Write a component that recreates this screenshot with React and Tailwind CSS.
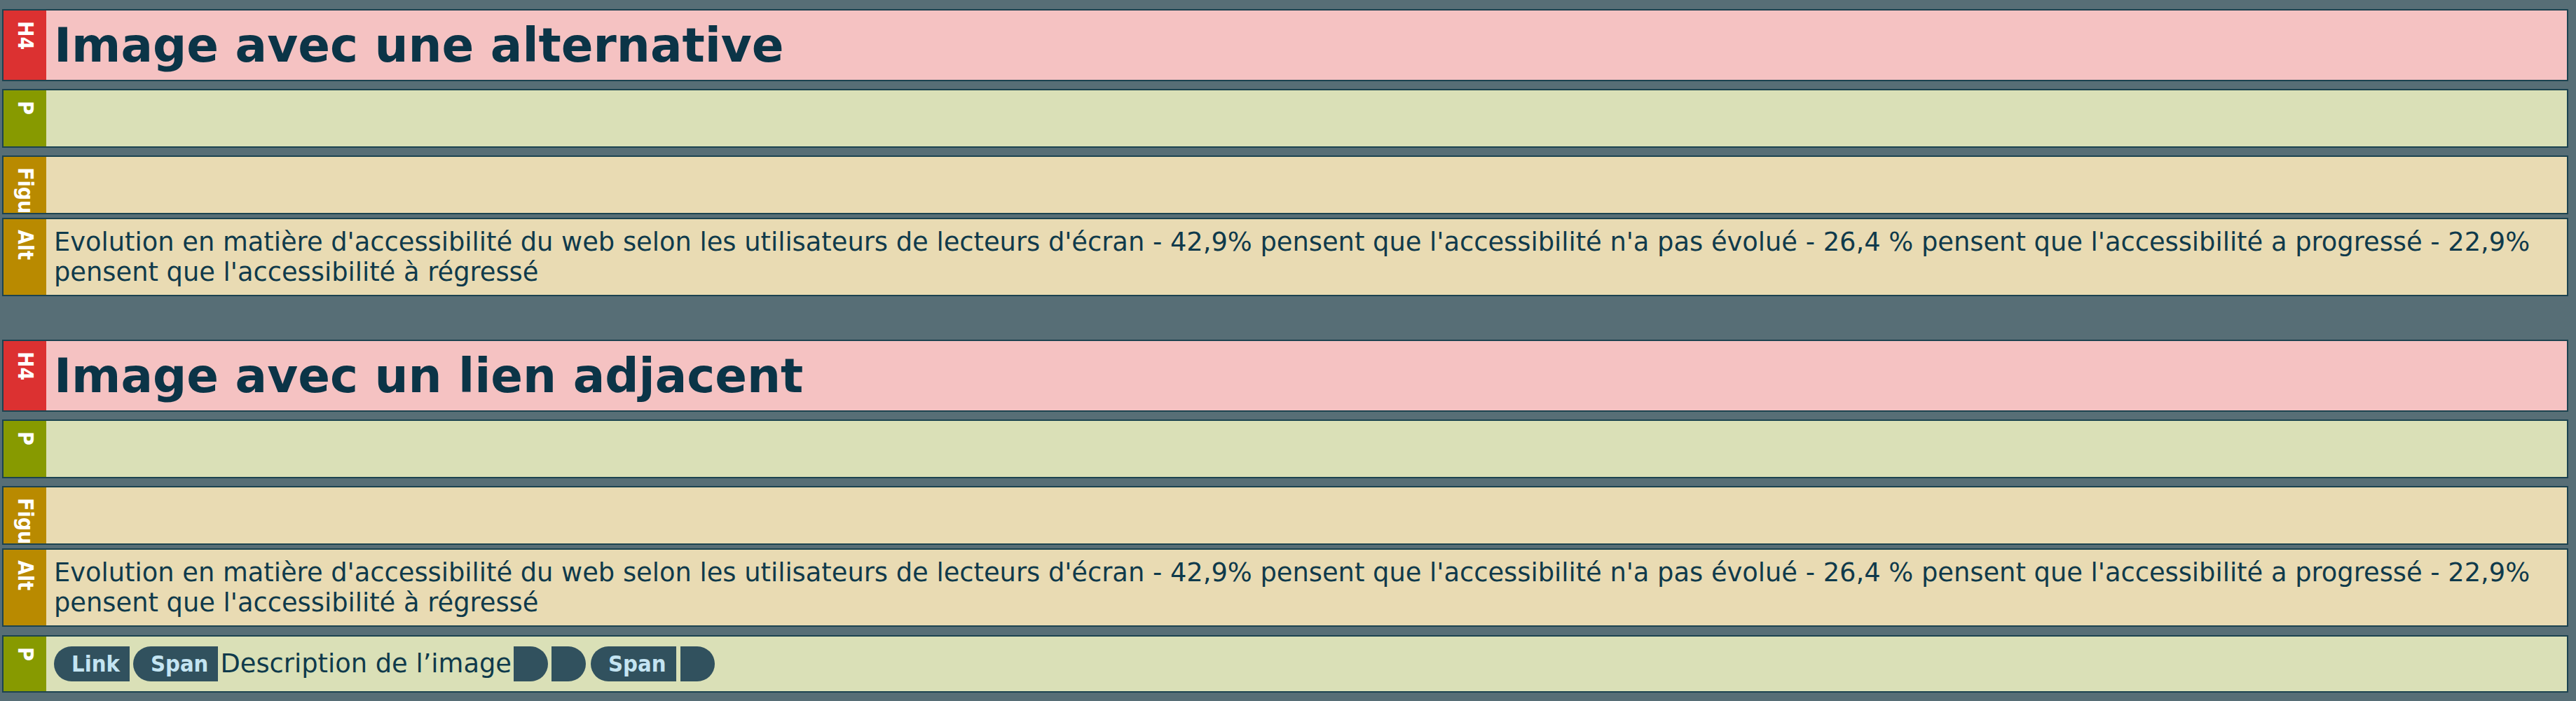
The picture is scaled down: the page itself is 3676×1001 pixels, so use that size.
import React from "react";

const condensed = { fontFamily: '"DejaVu Sans Condensed", "DejaVu Sans", sans-serif' };
const body = { fontFamily: '"DejaVu Sans", Verdana, sans-serif' };

const kinds = {
  h4: { label: "H4", tag: "bg-[#dc3131]", box: "bg-[#f5c2c2]" },
  p: { label: "P", tag: "bg-[#879a00]", box: "bg-[#dae0b7]" },
  figure: { label: "Figure", tag: "bg-[#b98a00]", box: "bg-[#e9dbb3]" },
  alt: { label: "Alt", tag: "bg-[#b98a00]", box: "bg-[#e9dbb3]" },
};

const Block = ({ kind, className = "", children }) => {
  const k = kinds[kind];
  return (
    <div className={`flex overflow-hidden border-2 border-[#1c4350] ${className}`}>
      {/* Tag label */}
      <div className={`flex w-[61px] shrink-0 justify-center overflow-hidden pt-[15px] ${k.tag}`}>
        <span className="text-[30px] font-bold leading-none text-white [writing-mode:vertical-rl]" style={condensed}>
          {k.label}
        </span>
      </div>
      <div className={`flex min-w-0 flex-1 items-center px-[11px] ${k.box}`}>{children}</div>
    </div>
  );
};

const AltText = () => (
  <p className="text-[36.8px] leading-[43px] text-[#0f3a4b]" style={body}>
    Evolution en matière d'accessibilité du web selon les utilisateurs de lecteurs d'écran - 42,9% pensent que
    l'accessibilité n'a pas évolué - 26,4 % pensent que l'accessibilité a progressé - 22,9%
    <br />
    pensent que l'accessibilité à régressé
  </p>
);

const OpenTag = ({ children }) => (
  <span
    className="flex h-[50px] items-center rounded-l-[25px] bg-[#31515e] pl-[25px] pr-[14px] text-[32.5px] font-bold text-[#c4e4f2]"
    style={condensed}
  >
    {children}
  </span>
);

const CloseTag = ({ className = "" }) => (
  <span className={`h-[50px] w-[49px] rounded-r-[25px] bg-[#31515e] ${className}`} />
);

const Section = ({ title, children }) => (
  <div className="flex flex-col">
    <Block kind="h4" className="h-[103px]">
      <h4 className="text-[67.5px] font-bold leading-none text-[#0b3447]" style={body}>
        {title}
      </h4>
    </Block>
    <Block kind="p" className="mt-[11px] h-[84px]" />
    <Block kind="figure" className="mt-[11px] h-[84px]" />
    <Block kind="alt" className="mt-[5px] h-[112px]">
      <AltText />
    </Block>
    {children}
  </div>
);

export default function App() {
  return (
    <div className="min-h-screen bg-[#576e76] pb-[12px] pl-[3px] pr-[11px] pt-[13px]" style={body}>
      <Section title="Image avec une alternative" />
      <div className="mt-[62px]">
        <Section title="Image avec un lien adjacent">
          <Block kind="p" className="mt-[12px] h-[82px]">
            <div className="flex items-center text-[36.8px] text-[#0f3a4b]">
              <OpenTag>Link</OpenTag>
              <span className="ml-[5px]" />
              <OpenTag>Span</OpenTag>
              <span className="ml-[3px]">Description de l’image</span>
              <CloseTag className="ml-[3px]" />
              <CloseTag className="ml-[5px]" />
              <span className="ml-[7px]" />
              <OpenTag>Span</OpenTag>
              <CloseTag className="ml-[6px]" />
            </div>
          </Block>
        </Section>
      </div>
    </div>
  );
}
